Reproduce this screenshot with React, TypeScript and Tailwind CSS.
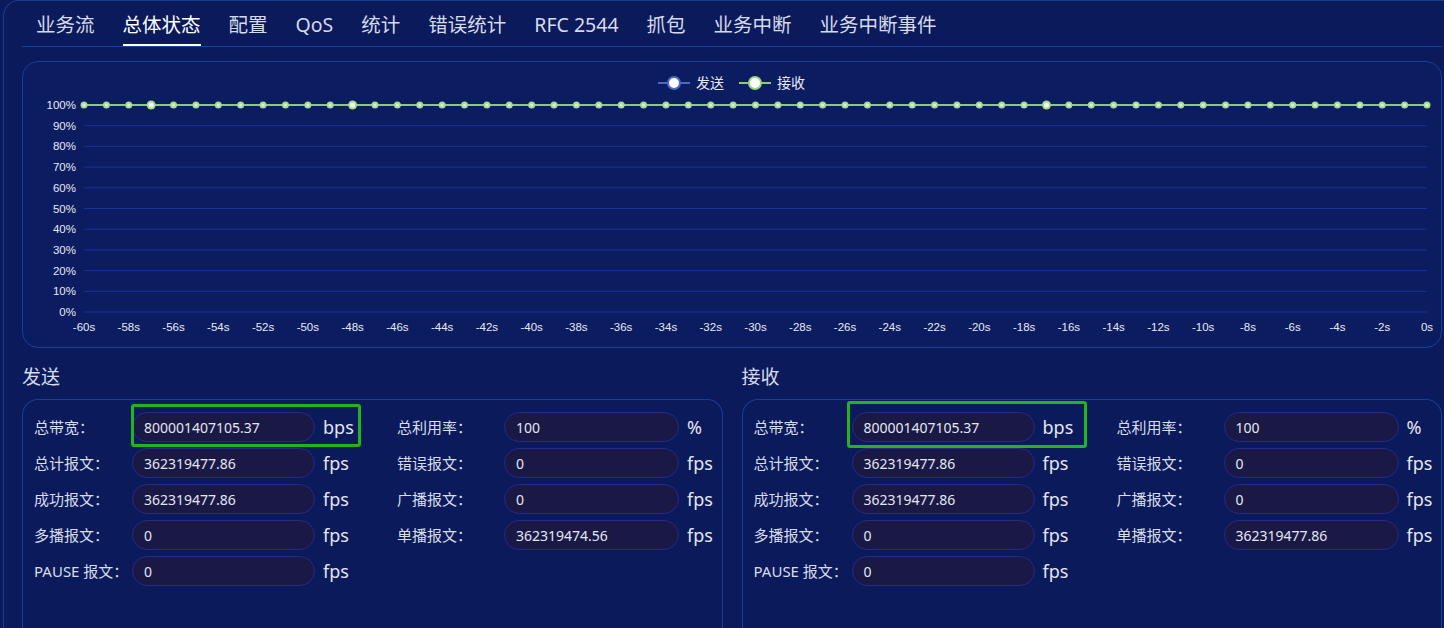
const tabs = ["业务流", "总体状态", "配置", "QoS", "统计", "错误统计", "RFC 2544", "抓包", "业务中断", "业务中断事件"];

type Row = { label: string; value: string; unit: string };

const sendLeft: Row[] = [
  { label: "总带宽：", value: "800001407105.37", unit: "bps" },
  { label: "总计报文：", value: "362319477.86", unit: "fps" },
  { label: "成功报文：", value: "362319477.86", unit: "fps" },
  { label: "多播报文：", value: "0", unit: "fps" },
  { label: "PAUSE 报文：", value: "0", unit: "fps" },
];
const sendRight: Row[] = [
  { label: "总利用率：", value: "100", unit: "%" },
  { label: "错误报文：", value: "0", unit: "fps" },
  { label: "广播报文：", value: "0", unit: "fps" },
  { label: "单播报文：", value: "362319474.56", unit: "fps" },
];
const recvRight: Row[] = [
  { label: "总利用率：", value: "100", unit: "%" },
  { label: "错误报文：", value: "0", unit: "fps" },
  { label: "广播报文：", value: "0", unit: "fps" },
  { label: "单播报文：", value: "362319477.86", unit: "fps" },
];

const font = { fontFamily: '"Noto Sans", "Noto Sans CJK SC", sans-serif' };

function Chart() {
  const x0 = 61;
  const x1 = 1404;
  const step = (x1 - x0) / 60;
  const yTop = 43;
  const yStep = 20.7;
  const big = [3, 12, 43];
  return (
    <svg width="1418" height="285" viewBox="0 0 1418 285" className="block">
      {/* legend */}
      <g fontFamily='"Noto Sans CJK SC", sans-serif' fontSize="14" fill="#e6eaf5">
        <line x1="635" y1="21" x2="667" y2="21" stroke="#4e68c4" strokeWidth="2" />
        <circle cx="651" cy="21" r="6" fill="#ffffff" stroke="#4e68c4" strokeWidth="2" />
        <text x="673" y="26">发送</text>
        <line x1="716" y1="21" x2="748" y2="21" stroke="#8cca73" strokeWidth="2" />
        <circle cx="732" cy="21" r="6" fill="#ffffff" stroke="#9bd47f" strokeWidth="2" />
        <text x="754" y="26">接收</text>
      </g>
      {/* grid + y labels */}
      <g fontFamily='"Liberation Sans", sans-serif' fontSize="11.5" fill="#e6eaf5">
        {Array.from({ length: 11 }).map((_, i) => {
          const y = yTop + i * yStep;
          return (
            <g key={i}>
              {i > 0 && <line x1={x0} y1={y} x2={x1} y2={y} stroke="#1c2f9e" strokeWidth="1" />}
              <text x="53" y={y + 4} textAnchor="end">
                {100 - i * 10}%
              </text>
            </g>
          );
        })}
        {Array.from({ length: 31 }).map((_, i) => (
          <text key={i} x={x0 + i * 2 * step} y="269" textAnchor="middle">
            {i === 30 ? "0s" : `-${60 - i * 2}s`}
          </text>
        ))}
      </g>
      {/* series */}
      <line x1={x0} y1={yTop} x2={x1} y2={yTop} stroke="#8cca73" strokeWidth="2" />
      {Array.from({ length: 61 }).map((_, i) => {
        const b = big.includes(i);
        return (
          <g key={i}>
            <circle cx={x0 + i * step} cy={yTop} r={b ? 4.5 : 3.5} fill="#a6dc8a" />
            <circle cx={x0 + i * step} cy={yTop} r={b ? 2.5 : 1.6} fill={b ? "#f4ffe8" : "#d9f5c6"} />
          </g>
        );
      })}
    </svg>
  );
}

function Field({ row, wide, highlight }: { row: Row; wide: boolean; highlight?: string }) {
  return (
    <>
      <div className="text-[15px] text-[#d8ddec]">{row.label}</div>
      <div className="relative flex items-center">
        {highlight && <div className={highlight} />}
        <div
          className={`flex h-[30px] items-center rounded-full border border-[#27288a] bg-[#1a1946] pl-[11px] text-[14px] text-[#e4e6f2] ${
            wide ? "w-[183px]" : "w-[175px]"
          }`}
        >
          {row.value}
        </div>
        <span className="ml-[8px] text-[18px] text-[#e4e6f2]">{row.unit}</span>
      </div>
    </>
  );
}

function Panel({ left, right, box }: { left: Row[]; right: Row[]; box: string }) {
  return (
    <div className="h-[232px] rounded-t-2xl border border-b-0 border-[#1c3d96] pt-[12px] pl-[11px]">
      <div className="grid grid-cols-[98px_265px_107px_1fr] items-center gap-y-[6px]">
        {left.map((row, i) => (
          <div key={row.label} className="contents">
            <Field row={row} wide highlight={i === 0 ? box : undefined} />
            {right[i] ? <Field row={right[i]} wide={false} /> : <div className="col-span-2 h-[30px]" />}
          </div>
        ))}
      </div>
    </div>
  );
}

export default function App() {
  return (
    <div className="h-[628px] overflow-hidden bg-[#0b1a5b]" style={font}>
      <div className="ml-[3px] h-full rounded-tl-2xl border-t border-l border-[#1a3a8c] pl-[18px] pr-[2px]">
        <nav className="flex h-[46px] items-center gap-[28px] border-b border-[#17419c] pt-[3px] pl-[14px] text-[19.5px] text-[#d6dbea]">
          {tabs.map((t) => (
            <div
              key={t}
              className={`relative flex h-full items-center ${t === "总体状态" ? "text-white" : ""}`}
            >
              {t}
              {t === "总体状态" && <div className="absolute bottom-0 left-0 h-[2px] w-full bg-white" />}
            </div>
          ))}
        </nav>

        <div className="mt-[14px] h-[287px] rounded-2xl border border-[#1c3d96] bg-[#0c1c60]">
          <Chart />
        </div>

        <div className="mt-[17px] grid grid-cols-2 gap-[19px]">
          <div>
            <h3 className="mb-[10px] h-[24px] text-[19px] leading-[24px] text-[#d6dbea]">发送</h3>
            <Panel
              left={sendLeft}
              right={sendRight}
              box="pointer-events-none absolute -top-[8px] -left-[1px] h-[43px] w-[230px] rounded-[3px] border-[3px] border-[#1fb51f]"
            />
          </div>
          <div>
            <h3 className="mb-[10px] h-[24px] text-[19px] leading-[24px] text-[#d6dbea]">接收</h3>
            <Panel
              left={sendLeft}
              right={recvRight}
              box="pointer-events-none absolute -top-[11px] -left-[5px] h-[47px] w-[240px] rounded-[3px] border-[3px] border-[#1fb51f]"
            />
          </div>
        </div>
      </div>
    </div>
  );
}
